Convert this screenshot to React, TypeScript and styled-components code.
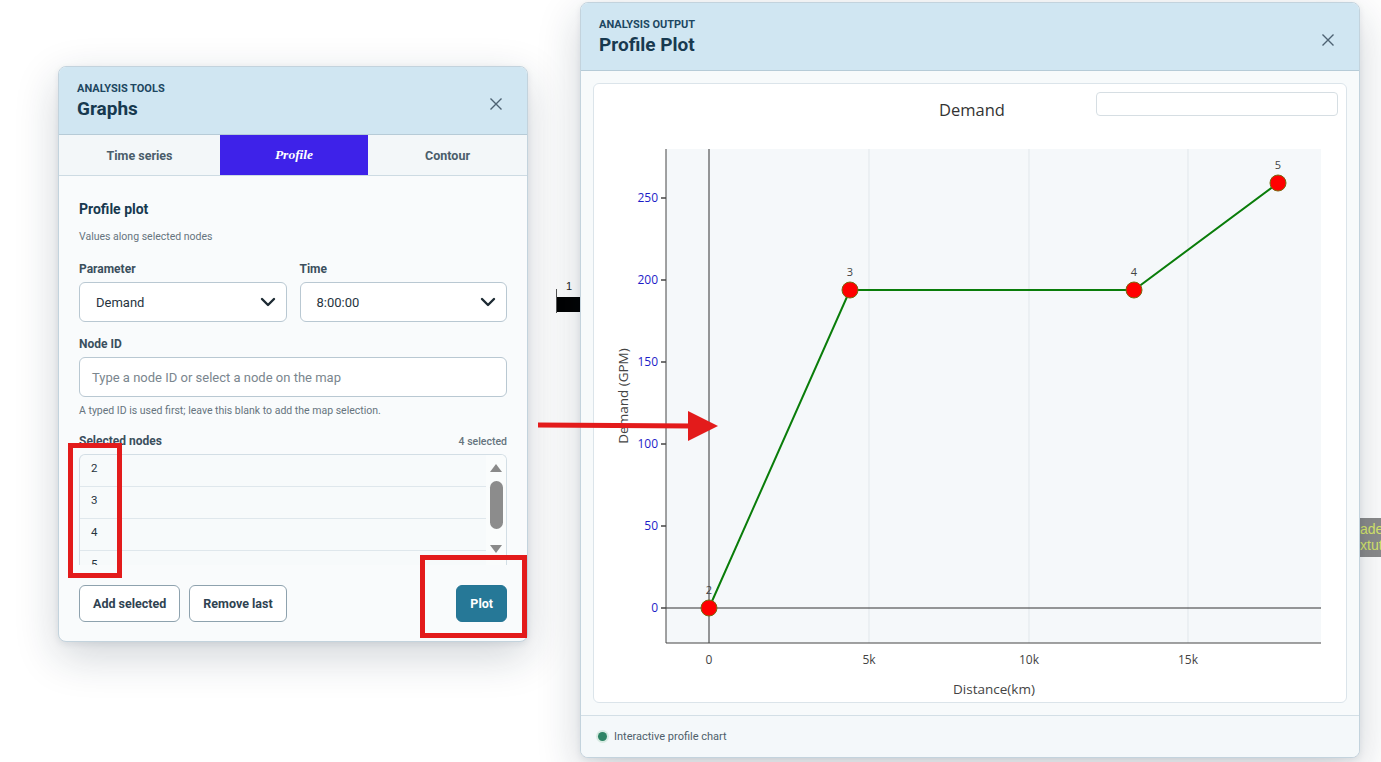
import React from 'react';
import styled, {createGlobalStyle} from 'styled-components';

const GlobalStyle = createGlobalStyle`
  html, body {
    margin: 0;
    padding: 0;
    background: #ffffff;
    font-family: Roboto, "Noto Sans", Arial, sans-serif;
    color: #1f3a4d;
  }
  * {
    box-sizing: border-box;
  }
`;

const Desktop = styled.div`
  position: relative;
  width: 1381px;
  height: 762px;
  overflow: hidden;
  background: #ffffff;
`;

// bits of the network map that peek out from behind the windows
const MapNode = styled.div`
  position: absolute;
  left: 556px;
  top: 289px;
  width: 40px;
  height: 24px;
  border-left: 1px solid #555;
  &::before {
    content: '1';
    position: absolute;
    left: 9px;
    top: -9px;
    font: 11px Arial, sans-serif;
    color: #222;
  }
  &::after {
    content: '';
    position: absolute;
    left: 0;
    top: 8px;
    width: 40px;
    height: 15px;
    background: #000;
  }
`;

const MapLabel = styled.div`
  position: absolute;
  left: 1358px;
  top: 518px;
  width: 30px;
  height: 39px;
  padding: 3px 0 0 2px;
  background: #8b8b8b;
  color: #d8e86a;
  font: 14px/16px Arial, sans-serif;
  white-space: nowrap;
  overflow: hidden;
`;

const Window = styled.section<{left: number; top: number; w: number; h: number}>`
  position: absolute;
  left: ${(p) => p.left}px;
  top: ${(p) => p.top}px;
  width: ${(p) => p.w}px;
  height: ${(p) => p.h}px;
  display: flex;
  flex-direction: column;
  border: 1px solid #c3d3dd;
  border-radius: 8px;
  overflow: hidden;
  background: #f9fbfc;
  box-shadow: 0 14px 44px rgba(20, 40, 60, 0.2), 0 2px 6px rgba(20, 40, 60, 0.08);
`;

const WindowHeader = styled.header`
  position: relative;
  flex: none;
  padding: 15px 18px 14px;
  background: #d0e6f2;
  border-bottom: 1px solid #b6cbd7;
`;

const Eyebrow = styled.div`
  font-size: 11px;
  font-weight: 700;
  color: #1d4761;
  text-transform: uppercase;
  line-height: 14px;
`;

const WindowTitle = styled.h2`
  margin: 2px 0 0;
  font-size: 19px;
  line-height: 22px;
  font-weight: 700;
  color: #17394f;
`;

const CloseButton = styled.button`
  position: absolute;
  right: 20px;
  top: 26px;
  width: 22px;
  height: 22px;
  padding: 0;
  border: none;
  background: transparent;
  color: #4d6272;
  display: flex;
  align-items: center;
  justify-content: center;
`;

const Tabs = styled.nav`
  flex: none;
  display: grid;
  grid-template-columns: 161px 148px 1fr;
  height: 41px;
  background: #f3f7f9;
  border-bottom: 1px solid #cddbe3;
`;

const Tab = styled.div<{active?: boolean}>`
  display: flex;
  align-items: center;
  justify-content: center;
  font-size: 12.5px;
  font-weight: 700;
  color: #4a5d6b;
  ${(p) =>
    p.active &&
    `
    background: #3e22e9;
    color: #ffffff;
    font-family: "Liberation Serif", "DejaVu Serif", serif;
    font-style: italic;
    font-size: 13.5px;
  `}
`;

const Body = styled.div`
  flex: 1;
  display: flex;
  flex-direction: column;
  padding: 24px 20px 0;
`;

const SectionTitle = styled.h3`
  margin: 0;
  font-size: 14px;
  line-height: 18px;
  font-weight: 700;
  color: #17394f;
`;

const Hint = styled.p<{top?: number}>`
  margin: ${(p) => p.top ?? 8}px 0 0;
  font-size: 10.5px;
  line-height: 13px;
  color: #66747e;
`;

const FieldGrid = styled.div`
  display: grid;
  grid-template-columns: 1fr 1fr;
  gap: 13px;
  margin-top: 19px;
`;

const Field = styled.div<{top?: number}>`
  display: flex;
  flex-direction: column;
  margin-top: ${(p) => p.top ?? 0}px;
`;

const Label = styled.label`
  font-size: 12px;
  line-height: 14px;
  font-weight: 700;
  color: #3b4f5d;
  margin-bottom: 6px;
`;

const SelectBox = styled.div`
  height: 40px;
  display: flex;
  align-items: center;
  justify-content: space-between;
  padding: 0 10px 0 16px;
  border: 1px solid #b9c8d2;
  border-radius: 6px;
  background: #ffffff;
  font-size: 13px;
  color: #26343e;
`;

const TextInput = styled.div`
  height: 40px;
  display: flex;
  align-items: center;
  padding: 0 12px;
  border: 1px solid #b9c8d2;
  border-radius: 6px;
  background: #ffffff;
  font-size: 13px;
  color: #7a868e;
`;

const ListHead = styled.div`
  display: flex;
  justify-content: space-between;
  align-items: flex-end;
  margin-top: 17px;
  margin-bottom: 6px;
`;

const ListLabel = styled.span`
  font-size: 12px;
  line-height: 14px;
  font-weight: 700;
  color: #3b4f5d;
`;

const Count = styled.span`
  font-size: 10.5px;
  font-weight: 500;
  color: #66747e;
`;

const NodeList = styled.div`
  height: 111px;
  display: flex;
  border: 1px solid #d3dee5;
  border-bottom: none;
  border-radius: 6px 6px 0 0;
  background: #f7fafb;
  overflow: hidden;
`;

const Rows = styled.ul`
  flex: 1;
  margin: 0;
  padding: 0;
  list-style: none;
`;

const Row = styled.li`
  height: 32px;
  flex: none;
  padding: 7px 0 0 11px;
  font-size: 11.5px;
  line-height: 13px;
  color: #26343e;
  border-bottom: 1px solid #dfe7ec;
`;

const ScrollTrack = styled.div`
  flex: none;
  width: 20px;
  display: flex;
  flex-direction: column;
  align-items: center;
  padding-top: 9px;
  background: #fafcfc;
`;

const ScrollArrow = styled.div<{down?: boolean}>`
  width: 0;
  height: 0;
  border-left: 6px solid transparent;
  border-right: 6px solid transparent;
  ${(p) => (p.down ? 'border-top: 8px solid #8a8a8a;' : 'border-bottom: 8px solid #8a8a8a;')}
`;

const ScrollThumb = styled.div`
  width: 13px;
  height: 48px;
  margin: 9px 0 16px;
  border-radius: 7px;
  background: #8c8c8c;
`;

const Footer = styled.div`
  display: flex;
  align-items: center;
  gap: 9px;
  margin-top: 20px;
  padding-bottom: 19px;
`;

const Button = styled.button<{primary?: boolean}>`
  height: 37px;
  padding: 0 13px;
  border-radius: 6px;
  font-family: inherit;
  font-size: 12.5px;
  font-weight: 700;
  border: 1px solid ${(p) => (p.primary ? '#257595' : '#8ea2ae')};
  background: ${(p) => (p.primary ? '#267897' : '#ffffff')};
  color: ${(p) => (p.primary ? '#ffffff' : '#2f4352')};
  ${(p) => p.primary && 'margin-left: auto; padding: 0 13px;'}
`;

// right-hand window
const OutputBody = styled.div`
  flex: 1;
  padding: 12px;
  background: #f7fafb;
  border-bottom: 1px solid #d3dfe6;
`;

const ChartCard = styled.div`
  position: relative;
  height: 620px;
  border: 1px solid #dbe4ea;
  border-radius: 6px;
  background: #ffffff;
  overflow: hidden;
`;

const LegendBox = styled.div`
  position: absolute;
  right: 8px;
  top: 8px;
  width: 242px;
  height: 24px;
  border: 1px solid #d6dee3;
  border-radius: 4px;
  background: #ffffff;
`;

const StatusBar = styled.div`
  flex: none;
  height: 41px;
  display: flex;
  align-items: center;
  gap: 7px;
  padding: 0 17px;
  background: #f4f8fa;
  font-size: 11px;
  color: #4f5f6b;
`;

const StatusDot = styled.span`
  width: 9px;
  height: 9px;
  border-radius: 50%;
  background: #2e8465;
  box-shadow: 0 0 0 2px #d8ebe3;
`;

const Annotations = styled.svg`
  position: absolute;
  left: 0;
  top: 0;
  pointer-events: none;
`;

const CloseIcon = () => (
  <svg width="14" height="14" viewBox="0 0 14 14" fill="none" stroke="currentColor" strokeWidth="1.4">
    <path d="M1.5 1.5l11 11M12.5 1.5l-11 11" />
  </svg>
);

const Chevron = () => (
  <svg width="16" height="10" viewBox="0 0 16 10" fill="none" stroke="#1d2a33" strokeWidth="2.4" strokeLinecap="round" strokeLinejoin="round">
    <path d="M2 2l6 6 6-6" />
  </svg>
);

const points = [
  {id: '2', x: 115, y: 524},
  {id: '3', x: 256, y: 206},
  {id: '4', x: 540, y: 206},
  {id: '5', x: 684, y: 99},
];

const yTicks = [0, 50, 100, 150, 200, 250];
const xTicks = [
  {label: '0', x: 115},
  {label: '5k', x: 275},
  {label: '10k', x: 435},
  {label: '15k', x: 594},
];

const ProfileChart = () => {
  const plot = {l: 72, r: 727, t: 65, b: 559};
  const yOf = (v: number) => 524 - v * 1.64;
  const font = '"Open Sans", "Noto Sans", sans-serif';
  return (
    <svg width="751" height="618" viewBox="0 0 751 618" style={{display: 'block'}}>
      <text x="378" y="32" textAnchor="middle" fontFamily={font} fontSize="16.5" fill="#333">
        Demand
      </text>
      <rect x={plot.l} y={plot.t} width={plot.r - plot.l} height={plot.b - plot.t} fill="#f5f8fa" />
      {xTicks.slice(1).map((t) => (
        <line key={t.label} x1={t.x} x2={t.x} y1={plot.t} y2={plot.b} stroke="#e1e7eb" strokeWidth="1" />
      ))}
      <line x1="115" x2="115" y1={plot.t} y2={plot.b} stroke="#333" strokeWidth="1" />
      <line x1={plot.l} x2={plot.r} y1="524" y2="524" stroke="#333" strokeWidth="1" />
      <line x1={plot.l} x2={plot.l} y1={plot.t} y2={plot.b} stroke="#444" strokeWidth="1" />
      <line x1={plot.l} x2={plot.r} y1={plot.b} y2={plot.b} stroke="#444" strokeWidth="1" />
      {yTicks.map((v) => (
        <g key={v}>
          <line x1={plot.l - 5} x2={plot.l} y1={yOf(v)} y2={yOf(v)} stroke="#444" strokeWidth="1.5" />
          <text x={plot.l - 8} y={yOf(v) + 4} textAnchor="end" fontFamily={font} fontSize="12" fill="#1d1dc8">
            {v}
          </text>
        </g>
      ))}
      {xTicks.map((t) => (
        <text key={t.label} x={t.x} y="580" textAnchor="middle" fontFamily={font} fontSize="12" fill="#444">
          {t.label}
        </text>
      ))}
      <text x="400" y="610" textAnchor="middle" fontFamily={font} fontSize="13.5" fill="#444">
        Distance(km)
      </text>
      <text
        transform="translate(34 312) rotate(-90)"
        textAnchor="middle"
        fontFamily={font}
        fontSize="13.5"
        fill="#444"
      >
        Demand (GPM)
      </text>
      <polyline
        points={points.map((p) => `${p.x},${p.y}`).join(' ')}
        fill="none"
        stroke="#0a7d0a"
        strokeWidth="2"
      />
      {points.map((p) => (
        <g key={p.id}>
          <circle cx={p.x} cy={p.y} r="8" fill="#ff0000" stroke="#7a6a10" strokeWidth="1" />
          <text x={p.x} y={p.y - 14} textAnchor="middle" fontFamily={font} fontSize="11" fill="#444">
            {p.id}
          </text>
        </g>
      ))}
    </svg>
  );
};

export default function App() {
  return (
    <>
      <GlobalStyle />
      <Desktop>
        <MapNode />
        <MapLabel>
          ade
          <br />
          xtuto
        </MapLabel>

        <Window left={58} top={66} w={470} h={576}>
          <WindowHeader>
            <Eyebrow>Analysis tools</Eyebrow>
            <WindowTitle>Graphs</WindowTitle>
            <CloseButton>
              <CloseIcon />
            </CloseButton>
          </WindowHeader>
          <Tabs>
            <Tab>Time series</Tab>
            <Tab active>Profile</Tab>
            <Tab>Contour</Tab>
          </Tabs>
          <Body>
            <SectionTitle>Profile plot</SectionTitle>
            <Hint top={12}>Values along selected nodes</Hint>
            <FieldGrid>
              <Field>
                <Label>Parameter</Label>
                <SelectBox>
                  Demand
                  <Chevron />
                </SelectBox>
              </Field>
              <Field>
                <Label>Time</Label>
                <SelectBox>
                  8:00:00
                  <Chevron />
                </SelectBox>
              </Field>
            </FieldGrid>
            <Field top={15}>
              <Label>Node ID</Label>
              <TextInput>Type a node ID or select a node on the map</TextInput>
            </Field>
            <Hint top={7}>A typed ID is used first; leave this blank to add the map selection.</Hint>
            <ListHead>
              <ListLabel>Selected nodes</ListLabel>
              <Count>4 selected</Count>
            </ListHead>
            <NodeList>
              <Rows>
                {['2', '3', '4', '5'].map((n) => (
                  <Row key={n}>{n}</Row>
                ))}
              </Rows>
              <ScrollTrack>
                <ScrollArrow />
                <ScrollThumb />
                <ScrollArrow down />
              </ScrollTrack>
            </NodeList>
            <Footer>
              <Button>Add selected</Button>
              <Button>Remove last</Button>
              <Button primary>Plot</Button>
            </Footer>
          </Body>
        </Window>

        <Window left={580} top={2} w={780} h={756}>
          <WindowHeader>
            <Eyebrow>Analysis output</Eyebrow>
            <WindowTitle>Profile Plot</WindowTitle>
            <CloseButton>
              <CloseIcon />
            </CloseButton>
          </WindowHeader>
          <OutputBody>
            <ChartCard>
              <ProfileChart />
              <LegendBox />
            </ChartCard>
          </OutputBody>
          <StatusBar>
            <StatusDot />
            Interactive profile chart
          </StatusBar>
        </Window>

        <Annotations width="1381" height="762" viewBox="0 0 1381 762">
          <rect x="70.5" y="445.5" width="49" height="130" fill="none" stroke="#e31b1b" strokeWidth="5" />
          <rect x="422.5" y="557.5" width="102" height="78" fill="none" stroke="#e31b1b" strokeWidth="5" />
          <line x1="538" y1="425" x2="692" y2="426" stroke="#e31b1b" strokeWidth="5" />
          <polygon points="688,411 718,426 688,441" fill="#e31b1b" />
        </Annotations>
      </Desktop>
    </>
  );
}
